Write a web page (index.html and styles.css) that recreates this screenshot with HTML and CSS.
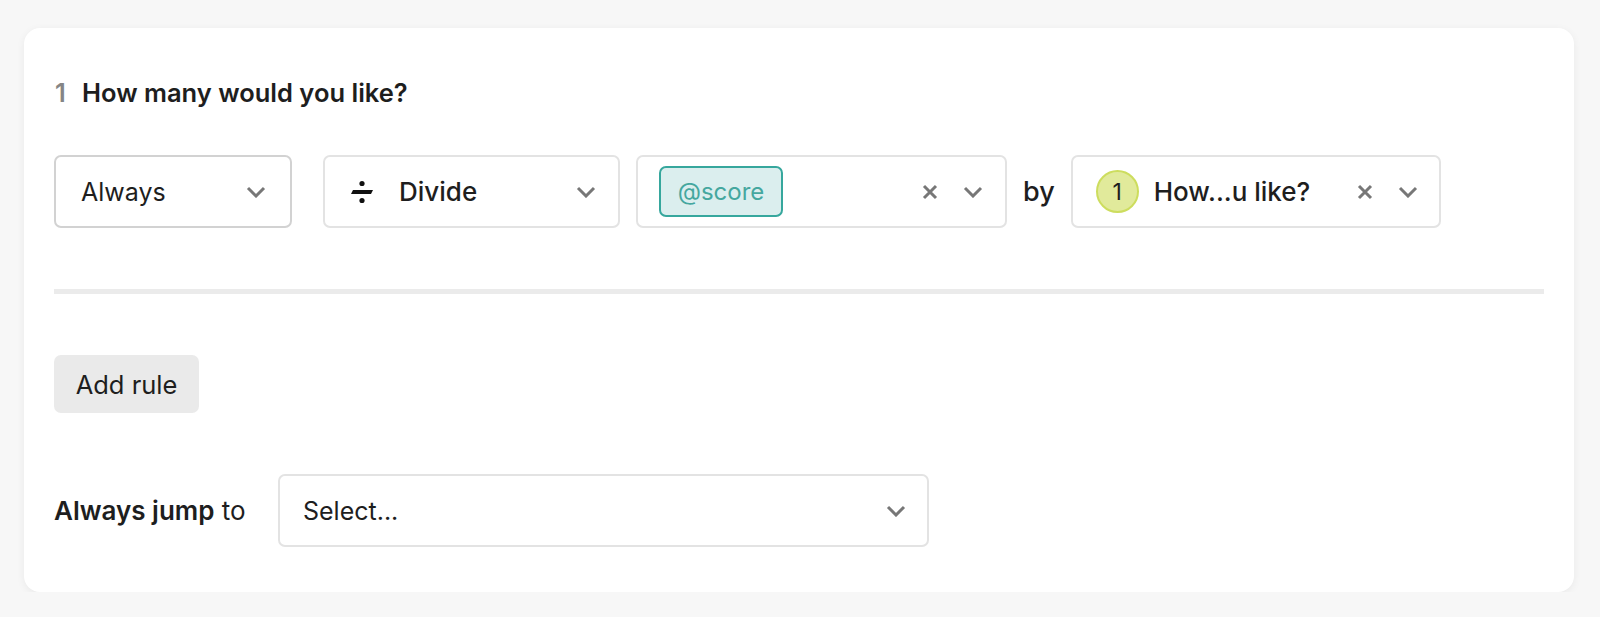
FILE: index.html
```html
<!DOCTYPE html>
<html>
<head>
<meta charset="utf-8">
<link rel="stylesheet" href="styles.css">
</head>
<body>
<div class="card">
  <div class="header"><span class="qnum">1</span><span class="qtitle">How many would you like?</span></div>

  <div class="rule-row">
    <div class="select sel-always">
      <span class="val">Always</span>
      <svg class="chev" viewBox="0 0 20 12"><path d="M2 2 L10 10 L18 2"/></svg>
    </div>
    <div class="select sel-op">
      <svg class="div-icon" viewBox="0 0 24 24"><circle cx="12" cy="3.5" r="2.6"/><polygon points="1,14 3,10 23,10 21,14"/><circle cx="12" cy="20.5" r="2.6"/></svg>
      <span class="val strong">Divide</span>
      <svg class="chev" viewBox="0 0 20 12"><path d="M2 2 L10 10 L18 2"/></svg>
    </div>
    <div class="select sel-var">
      <span class="tag">@score</span>
      <span class="spacer"></span>
      <svg class="clear" viewBox="0 0 16 16"><path d="M2 2 L14 14 M14 2 L2 14"/></svg>
      <svg class="chev" viewBox="0 0 20 12"><path d="M2 2 L10 10 L18 2"/></svg>
    </div>
    <span class="by">by</span>
    <div class="select sel-q">
      <span class="badge">1</span>
      <span class="val strong">How...u like?</span>
      <span class="spacer"></span>
      <svg class="clear" viewBox="0 0 16 16"><path d="M2 2 L14 14 M14 2 L2 14"/></svg>
      <svg class="chev" viewBox="0 0 20 12"><path d="M2 2 L10 10 L18 2"/></svg>
    </div>
  </div>

  <div class="divider"></div>

  <button class="add-rule">Add rule</button>

  <div class="jump-row">
    <span class="jump-label"><b>Always jump</b> to</span>
    <div class="select sel-jump">
      <span class="val">Select...</span>
      <svg class="chev" viewBox="0 0 20 12"><path d="M2 2 L10 10 L18 2"/></svg>
    </div>
  </div>
</div>
</body>
</html>
```

FILE: styles.css
```css
* { box-sizing: border-box; }

body {
  margin: 0;
  background: #f7f7f7;
  font-family: Inter, "Noto Sans", sans-serif;
  color: #1e1e1e;
}

.card {
  margin: 28px 26px 0 24px;
  background: #ffffff;
  border-radius: 16px;
  box-shadow: 0 2px 8px rgba(0, 0, 0, 0.06);
  padding: 48px 30px 45px 30px;
  display: flex;
  flex-direction: column;
  align-items: flex-start;
}

.header {
  display: flex;
  align-items: center;
  height: 32px;
  font-size: 25.5px;
  font-weight: 600;
}

.qnum {
  color: #858585;
  width: 28px;
  padding-left: 1px;
}

.rule-row {
  margin-top: 47px;
  display: flex;
  align-items: center;
}

.select {
  height: 73px;
  border: 2px solid #e3e3e3;
  border-radius: 7px;
  display: flex;
  align-items: center;
  background: #fff;
  font-size: 25px;
}

.val { white-space: nowrap; }
.strong { font-weight: 500; font-size: 26px; }

.spacer { flex: 1; }

.chev {
  width: 20px;
  height: 12px;
  fill: none;
  stroke: #777;
  stroke-width: 3;
  flex: none;
}

.clear {
  width: 16px;
  height: 16px;
  fill: none;
  stroke: #777;
  stroke-width: 3;
  flex: none;
}

.sel-always {
  width: 238px;
  border-color: #d2d2d2;
  padding: 0 24px 0 25px;
  justify-content: space-between;
}

.sel-op {
  width: 297px;
  margin-left: 31px;
  padding: 0 22px 0 25px;
}

.div-icon {
  width: 24px;
  height: 24px;
  fill: #111;
  flex: none;
  margin-right: 25px;
}

.sel-op .val { flex: 1; }

.sel-var {
  width: 371px;
  margin-left: 16px;
  padding: 0 22px 0 21px;
}

.tag {
  height: 51px;
  width: 124px;
  border: 2px solid #36a79d;
  border-radius: 7px;
  background: #dbeeee;
  color: #45a79f;
  display: flex;
  align-items: center;
  justify-content: center;
  font-size: 24px;
}

.sel-var .clear,
.sel-q .clear { margin-right: 25px; }

.by {
  font-size: 27px;
  font-weight: 500;
  margin: 0 16px;
}

.sel-q {
  width: 370px;
  padding: 0 21px 0 23px;
}

.badge {
  width: 43px;
  height: 43px;
  border-radius: 50%;
  background: #e1ea9b;
  border: 2px solid #cddd5e;
  display: flex;
  align-items: center;
  justify-content: center;
  font-size: 23px;
  font-weight: 400;
  margin-right: 15px;
  flex: none;
}

.divider {
  align-self: stretch;
  height: 5px;
  background: #ebebeb;
  margin-top: 61px;
}

.add-rule {
  margin-top: 61px;
  width: 145px;
  height: 58px;
  border: none;
  border-radius: 7px;
  background: #eaeaea;
  font-family: inherit;
  font-size: 25.5px;
  color: #1e1e1e;
  padding: 0;
}

.jump-row {
  margin-top: 61px;
  display: flex;
  align-items: center;
}

.jump-label {
  font-size: 26px;
  width: 224px;
}

.jump-label b { font-weight: 600; }

.sel-jump {
  width: 651px;
  height: 73px;
  padding: 0 21px 0 23px;
  justify-content: space-between;
}
```
